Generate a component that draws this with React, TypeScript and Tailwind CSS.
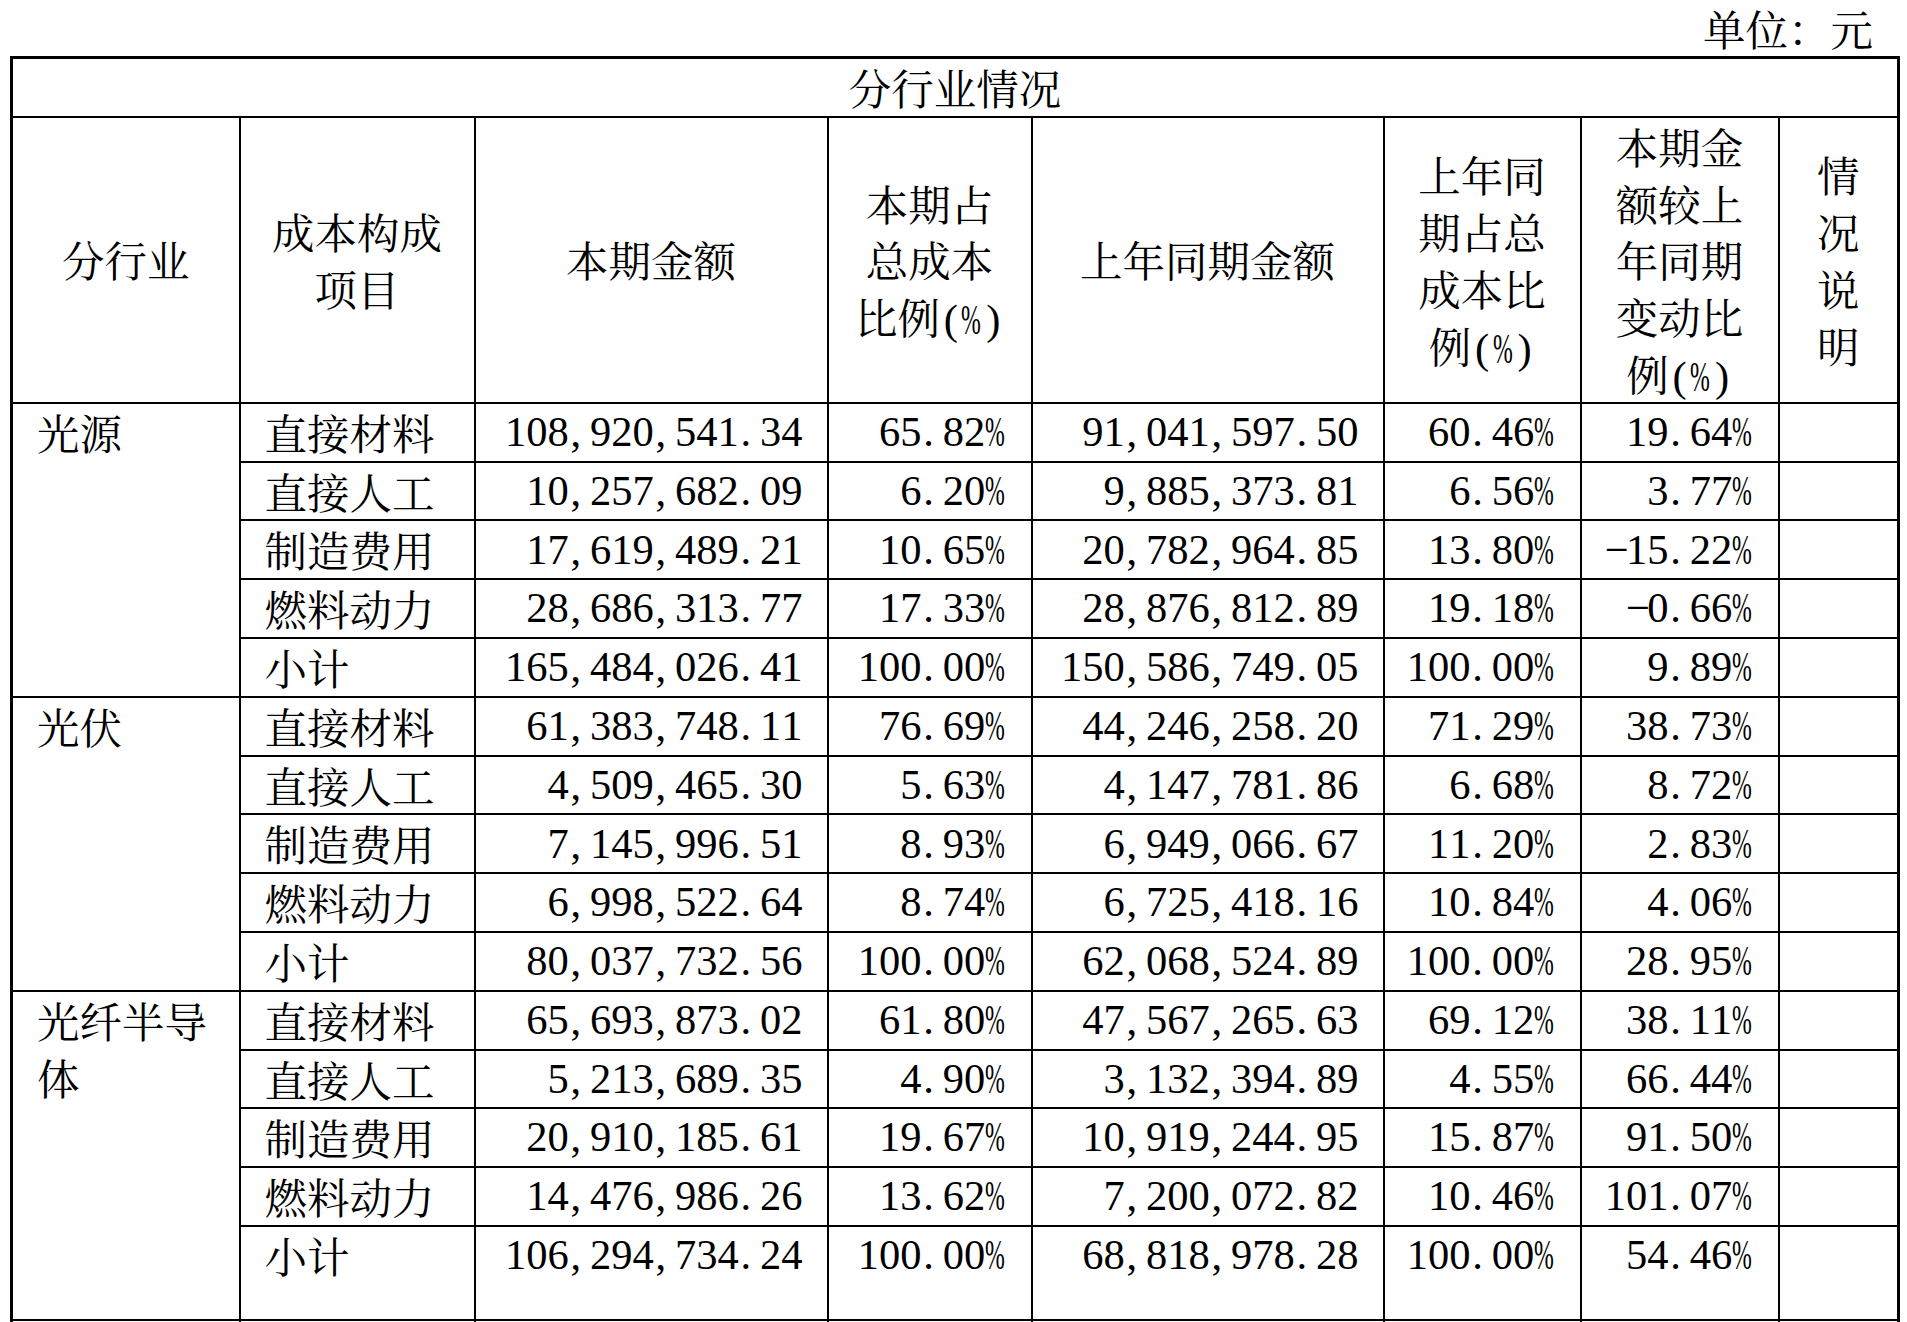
type Row = [string, string, string, string, string, string];

interface Group {
  name: string[];
  rows: Row[];
}

const groups: Group[] = [
  {
    name: ["光源"],
    rows: [
      ["直接材料", "108,920,541.34", "65.82%", "91,041,597.50", "60.46%", "19.64%"],
      ["直接人工", "10,257,682.09", "6.20%", "9,885,373.81", "6.56%", "3.77%"],
      ["制造费用", "17,619,489.21", "10.65%", "20,782,964.85", "13.80%", "-15.22%"],
      ["燃料动力", "28,686,313.77", "17.33%", "28,876,812.89", "19.18%", "-0.66%"],
      ["小计", "165,484,026.41", "100.00%", "150,586,749.05", "100.00%", "9.89%"],
    ],
  },
  {
    name: ["光伏"],
    rows: [
      ["直接材料", "61,383,748.11", "76.69%", "44,246,258.20", "71.29%", "38.73%"],
      ["直接人工", "4,509,465.30", "5.63%", "4,147,781.86", "6.68%", "8.72%"],
      ["制造费用", "7,145,996.51", "8.93%", "6,949,066.67", "11.20%", "2.83%"],
      ["燃料动力", "6,998,522.64", "8.74%", "6,725,418.16", "10.84%", "4.06%"],
      ["小计", "80,037,732.56", "100.00%", "62,068,524.89", "100.00%", "28.95%"],
    ],
  },
  {
    name: ["光纤半导", "体"],
    rows: [
      ["直接材料", "65,693,873.02", "61.80%", "47,567,265.63", "69.12%", "38.11%"],
      ["直接人工", "5,213,689.35", "4.90%", "3,132,394.89", "4.55%", "66.44%"],
      ["制造费用", "20,910,185.61", "19.67%", "10,919,244.95", "15.87%", "91.50%"],
      ["燃料动力", "14,476,986.26", "13.62%", "7,200,072.82", "10.46%", "101.07%"],
      ["小计", "106,294,734.24", "100.00%", "68,818,978.28", "100.00%", "54.46%"],
    ],
  },
];

// half-width cells like the SimSun digits in the source document
function Num({ v }: { v: string }) {
  return (
    <span className="leading-none font-['Liberation_Serif','Times_New_Roman',serif]">
      {v.split("").map((c, i) => {
        if (c === "%")
          return (
            <span key={i} className="inline-block w-[0.5em] text-left leading-none">
              <span className="inline-block origin-left scale-x-[0.56] leading-none">%</span>
            </span>
          );
        if (c === "," || c === ".")
          return (
            <span key={i} className="inline-block w-[0.5em] text-left pl-[0.04em] leading-none">
              {c}
            </span>
          );
        if (c === "-")
          return (
            <span key={i} className="inline-block w-[0.5em] text-center leading-none">
              −
            </span>
          );
        return (
          <span key={i} className="inline-block w-[0.5em] text-center leading-none">
            {c}
          </span>
        );
      })}
    </span>
  );
}

function HeadCell({ lines }: { lines: React.ReactNode[] }) {
  return (
    <th className="border-2 border-black px-6 py-0 text-center align-middle font-normal">
      {lines.map((l, i) => (
        <div key={i} className="h-[56.8px] whitespace-nowrap">
          {l}
        </div>
      ))}
    </th>
  );
}

export default function App() {
  return (
    <div className="min-h-screen bg-white px-[10px] text-[42.5px] leading-[56.8px] text-black font-['Noto_Serif_CJK_SC','Noto_Sans_CJK_SC',serif]">
      <div className="w-[1887px] h-[56px] leading-[56px] text-right pr-6">单位：元</div>

      <table className="w-[1887px] table-fixed border-collapse border-[3px] border-black">
        <colgroup>
          <col className="w-[228px]" />
          <col className="w-[235px]" />
          <col className="w-[353px]" />
          <col className="w-[204px]" />
          <col className="w-[352px]" />
          <col className="w-[197px]" />
          <col className="w-[198px]" />
          <col className="w-[120px]" />
        </colgroup>
        <thead>
          <tr>
            <th colSpan={8} className="border-2 border-black py-0 text-center font-normal">
              <div className="h-[56.8px]">分行业情况</div>
            </th>
          </tr>
          <tr>
            <HeadCell lines={["分行业"]} />
            <HeadCell lines={["成本构成", "项目"]} />
            <HeadCell lines={["本期金额"]} />
            <HeadCell
              lines={[
                "本期占",
                "总成本",
                <>
                  比例<Num v="(%)" />
                </>,
              ]}
            />
            <HeadCell lines={["上年同期金额"]} />
            <HeadCell
              lines={[
                "上年同",
                "期占总",
                "成本比",
                <>
                  例<Num v="(%)" />
                </>,
              ]}
            />
            <HeadCell
              lines={[
                "本期金",
                "额较上",
                "年同期",
                "变动比",
                <>
                  例<Num v="(%)" />
                </>,
              ]}
            />
            <HeadCell lines={["情", "况", "说", "明"]} />
          </tr>
        </thead>
        <tbody>
          {groups.map((g, gi) =>
            g.rows.map((r, ri) => {
              const tall = gi === groups.length - 1 && ri === g.rows.length - 1;
              const pad = tall ? "pb-[35px] pt-0" : "py-0";
              return (
                <tr key={`${gi}-${ri}`}>
                  {ri === 0 && (
                    <td
                      rowSpan={g.rows.length}
                      className="border-2 border-black px-6 py-0 align-top text-left"
                    >
                      {g.name.map((n, i) => (
                        <div key={i} className="h-[56.8px]">
                          {n}
                        </div>
                      ))}
                    </td>
                  )}
                  <td className={`border-2 border-black px-6 align-top text-left whitespace-nowrap ${pad}`}>
                    <div className="h-[56.8px]">{r[0]}</div>
                  </td>
                  {r.slice(1).map((v, ci) => (
                    <td
                      key={ci}
                      className={`border-2 border-black px-6 align-top whitespace-nowrap ${pad}`}
                    >
                      <div className="flex h-[56.8px] items-center justify-end">
                        <Num v={v} />
                      </div>
                    </td>
                  ))}
                  <td className={`border-2 border-black px-6 align-top ${pad}`}>
                    <div className="h-[56.8px]"></div>
                  </td>
                </tr>
              );
            })
          )}
          <tr>
            {Array.from({ length: 8 }).map((_, i) => (
              <td key={i} className="h-[59px] border-2 border-black"></td>
            ))}
          </tr>
        </tbody>
      </table>
    </div>
  );
}
